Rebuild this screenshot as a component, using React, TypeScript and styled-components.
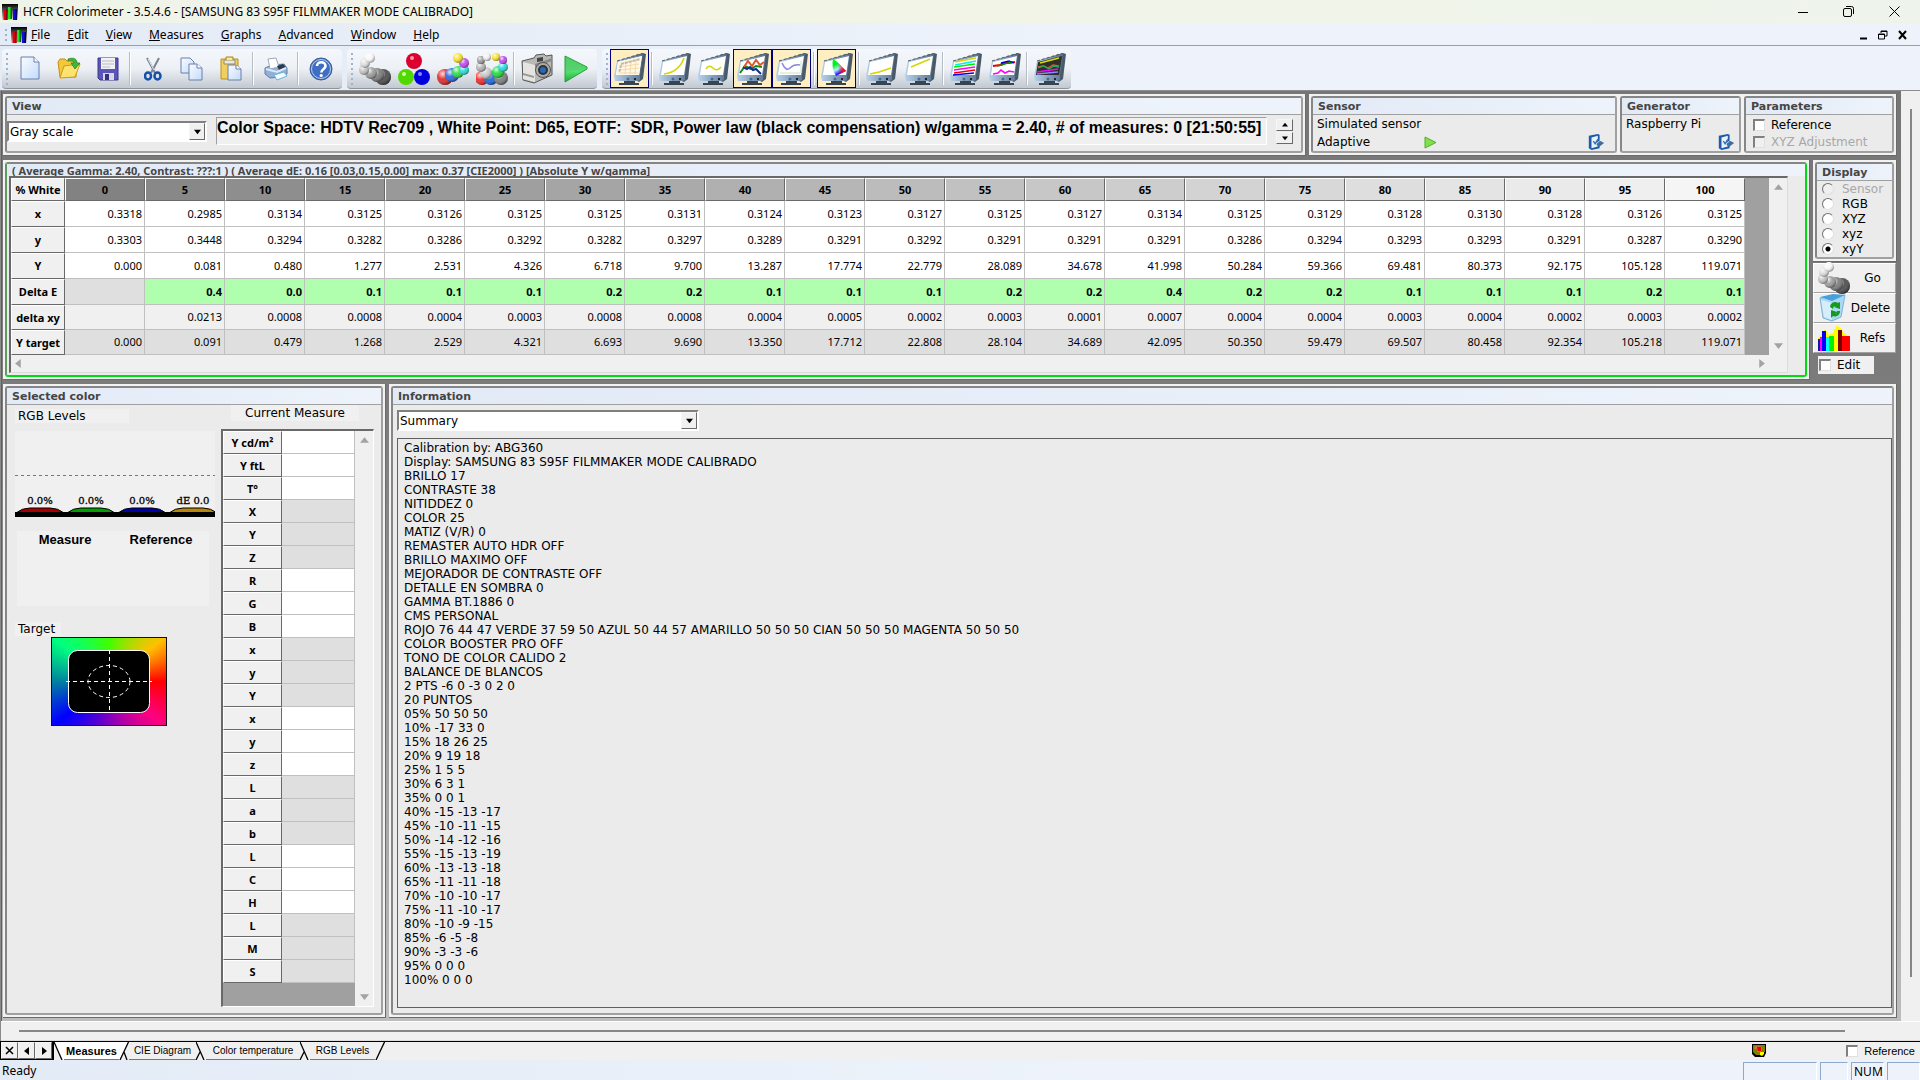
import React from "react";
import styled, { createGlobalStyle, css } from "styled-components";

const UI = `"Noto Sans", "Open Sans", sans-serif`;
const WIDE = `"DejaVu Sans", sans-serif`;
const ARIAL = `"Liberation Sans", Arial, sans-serif`;

const Global = createGlobalStyle`
  * { box-sizing: border-box; }
  body { margin: 0; background: #f0f0f0; font: 12px/14px ${WIDE}; color: #000; }
  button, input, select, textarea { font: inherit; color: inherit; margin: 0; border-radius: 0; }
`;

/* ---------- window frame ---------- */
const Window = styled.div`
  min-height: 100vh;
  display: flex;
  flex-direction: column;
`;
const TitleBar = styled.header`
  display: flex;
  align-items: center;
  gap: 5px;
  height: 23px;
  padding: 0 20px 0 2px;
  background: linear-gradient(90deg, #eff4e9, #f3f4e6 35%, #eef4ec);
  font: 12px/16px ${UI};
`;
const Spacer = styled.span`
  flex: 1;
`;
const Bare = styled.button`
  display: flex;
  align-items: center;
  justify-content: center;
  padding: 0;
  border: 0;
  background: none;
`;
const Caption = styled.div<{ $gap: number }>`
  display: flex;
  align-items: center;
  gap: ${(p) => p.$gap}px;
`;
const MenuBar = styled.nav`
  display: flex;
  align-items: center;
  height: 23px;
  padding: 2px 13px 0 5px;
  gap: 4px;
  background: linear-gradient(90deg, #e3ebf6, #eef3fb 60%);
  border-bottom: 1px solid #a0a0a0;
`;
const MenuList = styled.div`
  display: flex;
  gap: 17px;
`;
const MenuItem = styled(Bare)`
  font: 12px/18px ${UI};
  white-space: pre;
`;
const Grip = styled.span<{ $tall?: boolean }>`
  width: 2px;
  height: ${(p) => (p.$tall ? 32 : 12)}px;
  background: repeating-linear-gradient(#9db4cf 0 2px, transparent 2px 5px);
`;
const ToolStrip = styled.div`
  display: flex;
  gap: 5px;
  height: 45px;
  padding: 3px 3px 1px 2px;
  background: linear-gradient(90deg, #e3ebf6, #eef3fb 60%);
  border-bottom: 1px solid #8d8d8d;
`;
const ToolGroup = styled.div`
  display: flex;
  align-items: center;
  padding: 0 2px 0 4px;
  border-bottom: 1px solid #8d949c;
  border-radius: 4px;
  background: linear-gradient(#f4f7fb, #edf1f6 50%, #c3c9d1);
`;
const Tools = styled.div`
  display: flex;
  align-items: center;
  padding-left: 2px;
`;
const ToolButton = styled(Bare)<{ $on?: boolean }>`
  width: 39px;
  height: 39px;
  ${(p) =>
    p.$on &&
    css`
      border: 1px solid #000080;
      background: #ffeec2;
    `}
`;
const ToolSep = styled.span`
  width: 2px;
  height: 33px;
  margin: 0 2px;
  border-left: 1px solid #b4bcc6;
  border-right: 1px solid #fff;
`;

/* ---------- document area ---------- */
const Client = styled.div`
  flex: 1;
  display: grid;
  grid-template-columns: minmax(0, 1fr) 19px;
  grid-template-rows: 1fr 20px;
  border-left: 1px solid #8a8a8a;
`;
const Dialog = styled.main`
  display: flex;
  flex-direction: column;
  gap: 4px;
  padding: 3px 4px 3px 1px;
  background: linear-gradient(#767676, #7c7c7c 35%, #bdbdbd);
  border-left: 1px solid #5f5f5f;
`;
const Track = styled.div<{ $row?: boolean }>`
  display: flex;
  background: #f0f0f0;
  ${(p) =>
    p.$row
      ? css`
          grid-column: 1 / -1;
          align-items: center;
          padding: 0 75px 1px 18px;
          border-top: 1px solid #fff;
          border-bottom: 1px solid #dcdcdc;
        `
      : css`
          justify-content: center;
          padding: 18px 0 44px;
        `}
`;
const Thumb = styled.span<{ $row?: boolean }>`
  background: #868686;
  ${(p) => (p.$row ? "flex: 1; height: 2px;" : "width: 2px;")}
`;
const Line = styled.div<{ $grow?: boolean }>`
  display: flex;
  gap: 3px;
  ${(p) => p.$grow && "flex: 1;"}
`;
const Group = styled.div<{ $grow?: boolean }>`
  display: flex;
  gap: 3px;
  padding: 2px;
  background: #f2f2f2;
  border-right: 1px solid #6b6b6b;
  border-bottom: 1px solid #6b6b6b;
  ${(p) => p.$grow && "flex: 1; min-width: 0;"}
`;
const Panel = styled.section<{ $w?: number; $green?: boolean }>`
  display: flex;
  flex-direction: column;
  ${(p) => (p.$w ? `width: ${p.$w}px;` : "flex: 1; min-width: 0;")}
  border: 2px solid;
  border-color: #868686 #a0a0a0 #a0a0a0 #868686;
  border-radius: 3px;
  background: #ebebeb;
  ${(p) =>
    p.$green &&
    css`
      border-color: #868686 #00dc14 #00dc14 #5f9a62;
    `}
`;
const PanelTitle = styled.h2<{ $small?: boolean }>`
  margin: 0;
  padding: 0 5px;
  height: ${(p) => (p.$small ? 12 : 17)}px;
  overflow: hidden;
  white-space: nowrap;
  color: #454545;
  background: linear-gradient(90deg, #e2eaf6, #eef3fb);
  font: bold 11px/17px ${WIDE};
  ${(p) => (p.$small ? `font: bold 11px/13px ${UI};` : "border-bottom: 1px solid #a0a0a0;")}
`;
const Body = styled.div<{ $col?: boolean }>`
  flex: 1;
  display: flex;
  min-width: 0;
  ${(p) => p.$col && "flex-direction: column;"}
`;

/* ---------- drop-down ---------- */
const Combo = styled.div<{ $w: number }>`
  display: flex;
  width: ${(p) => p.$w}px;
  height: 21px;
  border: 2px solid;
  border-color: #808080 #fff #fff #808080;
  background: #fff;
`;
const Select = styled.select`
  appearance: none;
  flex: 1;
  min-width: 0;
  padding: 0 1px;
  border: 0;
  background: #fff;
  font: 12px/16px ${WIDE};
`;
const raised = css`
  border: 1px solid;
  border-color: #f6f6f6 #696969 #696969 #f6f6f6;
  background: #f0f0f0;
`;
const ComboArrow = styled.span`
  ${raised}
  width: 16px;
  display: flex;
  align-items: center;
  justify-content: center;
  pointer-events: none;
`;

/* ---------- view / sensor row ---------- */
const ViewBody = styled(Body)`
  align-items: flex-start;
  gap: 9px;
  padding: 2px 8px 6px 0;
`;
const StatusText = styled.output`
  flex: 1;
  min-width: 0;
  height: 28px;
  overflow: hidden;
  white-space: pre;
  border: 1px solid;
  border-color: #a0a0a0 #fff #fff #a0a0a0;
  background: #f0f0f0;
  font: bold 16px/19px ${ARIAL};
`;
const ComboSlot = styled.div`
  padding-top: 4px;
`;
const Spin = styled.div`
  display: flex;
  flex-direction: column;
  gap: 1px;
  padding: 2px 0 0;
`;
const SpinButton = styled(Bare)`
  ${raised}
  width: 17px;
  height: 12px;
`;
const DeviceBody = styled(Body)<{ $end: number }>`
  flex-direction: column;
  padding: 0 ${(p) => p.$end}px 0 3px;
  line-height: 17px;
`;
const DeviceRow = styled.div`
  display: flex;
  align-items: center;
  height: 18px;
`;
const DeviceName = styled.span<{ $w?: number }>`
  padding-left: 1px;
  ${(p) => p.$w && `width: ${p.$w}px;`}
`;
const Checks = styled(Body)`
  flex-direction: column;
  padding: 1px 7px;
`;
const CheckLabel = styled.label<{ $off?: boolean }>`
  display: flex;
  align-items: center;
  gap: 6px;
  height: 17px;
  ${(p) => p.$off && "color: #a8a8a8;"}
`;
const Check = styled.input`
  appearance: none;
  width: 12px;
  height: 12px;
  border: 1px solid;
  border-width: 2px 1px 1px 2px;
  border-color: #808080 #e0e0e0 #e0e0e0 #808080;
  background: #fff;
  &:disabled {
    background: #f0f0f0;
  }
`;

/* ---------- measures table ---------- */
const GridBox = styled.div`
  flex: 1;
  min-width: 0;
  display: grid;
  grid-template-columns: minmax(0, 1fr) 18px;
  grid-template-rows: 177px 17px;
  margin: 0 17px 2px 2px;
  border: 1px solid;
  border-width: 2px 1px 1px 2px;
  border-color: #696969 #dcdcdc #dcdcdc #696969;
  background: #f0f0f0;
`;
const GridView = styled.div`
  overflow: hidden;
  background: #a0a0a0;
`;
const Sheet = styled.table`
  table-layout: fixed;
  width: 1734px;
  border-collapse: separate;
  border-spacing: 0;
  background: #f0f0f0;
  font: 11px/14px ${UI};
  th,
  td {
    padding: 0 2px;
    white-space: nowrap;
    overflow: hidden;
  }
`;
const headEdge = css`
  border: 1px solid;
  border-color: #fff #696969 #696969 #fff;
`;
const ColHead = styled.th<{ $shade: number }>`
  ${headEdge}
  height: 23px;
  background: rgb(${(p) => `${p.$shade}, ${p.$shade}, ${p.$shade}`});
`;
const RowHead = styled.th`
  ${headEdge}
  background: #f0f0f0;
`;
const Cell = styled.td<{ $bg: string; $bold?: boolean }>`
  border-right: 1px solid #c0c0c0;
  border-bottom: 1px solid #c0c0c0;
  text-align: right;
  background: ${(p) => p.$bg};
  font-weight: ${(p) => (p.$bold ? "bold" : "normal")};
`;
const SheetRow = styled.tr<{ $h: number }>`
  height: ${(p) => p.$h}px;
`;
const Bar = styled.div<{ $row?: boolean }>`
  display: flex;
  flex-direction: ${(p) => (p.$row ? "row" : "column")};
  justify-content: space-between;
  align-items: center;
  padding: ${(p) => (p.$row ? "0 3px" : "5px 0")};
  background: #f0f0f0;
`;

/* ---------- right column ---------- */
const Side = styled.div`
  display: flex;
  flex-direction: column;
  width: 84px;
`;
const Radios = styled(Body)`
  flex-direction: column;
  padding: 0 0 1px 5px;
`;
const RadioLabel = styled.label<{ $off?: boolean }>`
  display: flex;
  align-items: center;
  gap: 8px;
  height: 15px;
  ${(p) => p.$off && "color: #a8a8a8;"}
`;
const Radio = styled.input`
  appearance: none;
  width: 12px;
  height: 12px;
  border: 1px solid;
  border-color: #707070 #e0e0e0 #e0e0e0 #707070;
  border-radius: 6px;
  background: #fff;
  &:checked {
    background: radial-gradient(circle, #000 0 2px, #fff 3px);
  }
  &:disabled {
    background: #f0f0f0;
  }
`;
const SideButton = styled.button`
  display: flex;
  align-items: center;
  width: 83px;
  height: 30px;
  padding: 0 0 0 4px;
  border: 1px solid;
  border-color: #fff #a0a0a0 #a0a0a0 #fff;
  background: #f0f0f0;
  font: 12px/16px ${WIDE};
  span {
    flex: 1;
    text-align: center;
  }
`;
const EditLabel = styled.label`
  display: flex;
  align-items: center;
  gap: 6px;
  width: 56px;
  height: 18px;
  margin: 3px 0 0 5px;
  padding-left: 1px;
  background: #f0f0f0;
`;
const SideStack = styled.div`
  padding-top: 1px;
`;

/* ---------- selected color ---------- */
const LeftCol = styled.div`
  width: 214px;
  padding: 4px 0 0 8px;
`;
const RightCol = styled.div`
  flex: 1;
  display: flex;
  flex-direction: column;
  padding: 0 7px 6px 0;
`;
const Tag = styled.div<{ $w: number }>`
  width: ${(p) => p.$w}px;
  padding-left: 3px;
  background: #f0f0f0;
`;
const ChartSlot = styled.div`
  padding: 8px 0 14px;
  svg {
    display: block;
  }
`;
const Swatches = styled.div`
  display: flex;
  width: 192px;
  height: 75px;
  margin: 0 0 16px 2px;
  padding-top: 1px;
  background: #f0f0f0;
  font: bold 13px/16px ${ARIAL};
  span {
    flex: 1;
    text-align: center;
  }
`;
const Wheel = styled.div`
  width: 116px;
  height: 89px;
  margin: 1px 0 0 36px;
  border: 1px solid #111;
  background: conic-gradient(#40ff00, #ffc000 52deg, #ff0000 90deg, #ff0080 128deg, #8000c0 180deg, #0000ff 232deg, #0080a0 270deg, #00ff80 308deg, #40ff00);
  svg {
    display: block;
  }
`;
const MeasureTitle = styled.div`
  width: 128px;
  margin: 0 0 8px 10px;
  line-height: 16px;
  text-align: center;
  background: #f0f0f0;
`;
const MeasureBox = styled.div`
  flex: 1;
  display: grid;
  grid-template-columns: minmax(0, 1fr) 18px;
  border: 1px solid;
  border-width: 2px 1px 1px 2px;
  border-color: #696969 #fff #fff #696969;
  background: #a0a0a0;
`;
const MeasureTable = styled(Sheet)`
  width: 132px;
  height: 552px;
`;

/* ---------- information ---------- */
const InfoBody = styled(Body)`
  flex-direction: column;
  gap: 7px;
  padding: 5px 0 5px 4px;
`;
const InfoText = styled.textarea`
  flex: 1;
  display: block;
  width: 100%;
  padding: 2px 6px;
  border: 1px solid #606060;
  outline: 0;
  resize: none;
  background: #ebebeb;
  font: 12px/14px ${WIDE};
`;

/* ---------- tabs and status ---------- */
const TabBar = styled.nav`
  display: flex;
  align-items: stretch;
  height: 19px;
  border-top: 1px solid #000;
  background: #f0f0f0;
  font: 11px/16px ${ARIAL};
`;
const NavButton = styled(Bare)`
  ${raised}
  width: 17px;
  height: 17px;
`;
const NavSet = styled.div`
  display: flex;
  border: 1px solid #000;
  border-width: 0 2px 1px 1px;
`;
const Tab = styled(Bare)<{ $on?: boolean; $w: number }>`
  width: ${(p) => p.$w}px;
  border-bottom: 1px solid #777;
  background: ${(p) => (p.$on ? "#fff" : "#f0f0f0")};
  font-weight: ${(p) => (p.$on ? "bold" : "normal")};
  font-size: ${(p) => (p.$on ? 11 : 10)}px;
  white-space: nowrap;
`;
const TabCheck = styled.label`
  display: flex;
  align-items: center;
  gap: 6px;
  padding: 0 5px 1px 80px;
`;
const StatusBar = styled.footer`
  display: flex;
  align-items: stretch;
  gap: 3px;
  height: 20px;
  padding-left: 2px;
  background: linear-gradient(90deg, #e3ebf6, #eef3fb 60%);
  font: 12px/22px ${UI};
`;
const Pane = styled.span<{ $w: number }>`
  width: ${(p) => p.$w}px;
  margin-top: 2px;
  padding-left: 2px;
  border: 1px solid;
  border-width: 1px 1px 0 1px;
  border-color: #8fa9cc #fff #fff #8fa9cc;
  line-height: 17px;
`;

/* ---------- drawings ---------- */
const Arrow = ({ dir, color = "#000", size = 6 }: { dir: "up" | "down" | "left" | "right"; color?: string; size?: number }) => {
  const d = { up: "M0 6L4 1L8 6z", down: "M0 2L4 7L8 2z", left: "M6 0L1 4L6 8z", right: "M2 0L7 4L2 8z" }[dir];
  return (
    <svg width={size} height={size} viewBox="0 0 8 8">
      <path d={d} fill={color} />
    </svg>
  );
};

const Logo = ({ s }: { s: number }) => (
  <svg width={s} height={s} viewBox="0 0 16 16">
    <defs>
      <linearGradient id="lg" x1="0" y1="0" x2="0" y2="1">
        <stop offset="0" stopColor="#000" />
        <stop offset="1" stopColor="#ddd" />
      </linearGradient>
    </defs>
    <rect width="16" height="16" fill="url(#lg)" />
    <path d="M1.500 5h4v11h-4z" fill="#e00010" />
    <path d="M4 5h1.500v11H4z" fill="#700" />
    <path d="M6 3h4v12H6z" fill="#20e020" />
    <path d="M8.500 3H10v12H8.500z" fill="#060" />
    <path d="M11 5h4v11h-4z" fill="#1010d0" />
    <path d="M13.500 5H15v11h-1.500z" fill="#006" />
  </svg>
);

const Ball = ({ x, y, r, c }: { x: number; y: number; r: number; c: string }) => (
  <g>
    <circle cx={x} cy={y} r={r} fill={c} />
    <circle cx={x} cy={y} r={r} fill="url(#ballShade)" />
  </g>
);
const flat = (x: number, y: number, c: string) => <circle cx={x} cy={y} r={8} fill={c} />;

const HiddenDefs = styled.svg`
  position: absolute;
`;
const SharedDefs = () => (
  <HiddenDefs width="0" height="0" aria-hidden="true">
    <defs>
      <radialGradient id="ballShade" cx="0.35" cy="0.3" r="0.75">
        <stop offset="0" stopColor="#fff" stopOpacity="0.85" />
        <stop offset="0.45" stopColor="#fff" stopOpacity="0.1" />
        <stop offset="1" stopColor="#000" stopOpacity="0.5" />
      </radialGradient>
      <linearGradient id="page" x1="0" y1="0" x2="1" y2="1">
        <stop offset="0" stopColor="#fafcff" />
        <stop offset="1" stopColor="#c3dbfa" />
      </linearGradient>
      <linearGradient id="bezel" x1="0" y1="0" x2="1" y2="0">
        <stop offset="0" stopColor="#b6d2ec" />
        <stop offset="1" stopColor="#56728f" />
      </linearGradient>
      <linearGradient id="go" x1="0" y1="0" x2="0" y2="1">
        <stop offset="0" stopColor="#3cc454" />
        <stop offset="0.6" stopColor="#52e070" />
        <stop offset="1" stopColor="#1fa83c" />
      </linearGradient>
      <linearGradient id="cieA" x1="0" y1="0" x2="0.4" y2="1">
        <stop offset="0.35" stopColor="#00f020" />
        <stop offset="0.65" stopColor="#b0f0ff" />
        <stop offset="0.9" stopColor="#2020ff" />
      </linearGradient>
      <linearGradient id="cieB" x1="0" y1="0" x2="1" y2="0">
        <stop offset="0.4" stopColor="#ff0000" stopOpacity="0" />
        <stop offset="0.85" stopColor="#ff1020" />
      </linearGradient>
    </defs>
  </HiddenDefs>
);

const GrayBalls = () => (
  <svg width="32" height="32" viewBox="0 0 32 32">
    <Ball x={24} y={24} r={8} c="#444" />
    <Ball x={18} y={22} r={7} c="#777" />
    <Ball x={12} y={20} r={6} c="#999" />
    <Ball x={5} y={17} r={5} c="#c0c0c0" />
    <Ball x={6} y={10} r={5} c="#dcdcdc" />
    <Ball x={11} y={5} r={5} c="#f6f6f6" />
  </svg>
);
const PrimaryBalls = () => (
  <svg width="32" height="32" viewBox="0 0 32 32">
    {flat(16, 8, "#dc0032")}
    {flat(8, 24, "#50d800")}
    {flat(24, 24, "#0000dc")}
    <circle cx="14" cy="5" r="2" fill="#f99" />
    <circle cx="6" cy="21" r="2" fill="#cfa" />
    <circle cx="22" cy="21" r="2" fill="#88f" />
  </svg>
);
const ColorBalls = () => (
  <svg width="32" height="32" viewBox="0 0 32 32">
    <Ball x={8} y={24} r={8} c="#e02020" />
    <Ball x={15} y={22} r={7} c="#2060e0" />
    <Ball x={21} y={19} r={6} c="#20e040" />
    <Ball x={27} y={17} r={5} c="#20d8d8" />
    <Ball x={27} y={10} r={5} c="#c040f0" />
    <Ball x={21} y={5} r={5} c="#f8e020" />
  </svg>
);
const RingBalls = () => (
  <svg width="32" height="32" viewBox="0 0 32 32">
    <Ball x={6} y={25} r={7} c="#f02020" />
    <Ball x={15} y={25} r={7} c="#1060e0" />
    <Ball x={25} y={25} r={7} c="#777" />
    <Ball x={10} y={20} r={6} c="#c8c8c8" />
    <Ball x={22} y={19} r={6} c="#10e030" />
    <Ball x={5} y={14} r={5} c="#b0b0b0" />
    <Ball x={27} y={14} r={5} c="#20d8d8" />
    <Ball x={5} y={7} r={4} c="#999" />
    <Ball x={27} y={7} r={4} c="#c040f0" />
    <Ball x={11} y={4} r={4} c="#eee" />
    <Ball x={20} y={4} r={4} c="#f8e020" />
  </svg>
);
const Camera = () => (
  <svg width="32" height="32" viewBox="0 0 32 32">
    <path d="M1 8l12-3 2-3 8-1 2 2 6-1v20L13 30 2 27z" fill="#b8b8b4" stroke="#555" />
    <path d="M2 9l12 3v17L2 26z" fill="#e4e4e0" />
    <path d="M14 11l17-6v3l-17 6z" fill="#8a8a86" />
    <path d="M2 20l11 3v2L2 22z" fill="#999" />
    <circle cx="22" cy="17" r="7.500" fill="#aaa" stroke="#555" />
    <circle cx="22" cy="17" r="5" fill="#333" />
    <circle cx="22" cy="17" r="3" fill="#1f6bbf" />
    <path d="M16 5l6-1v4l-6 1z" fill="#444" />
  </svg>
);
const Play = () => (
  <svg width="26" height="28" viewBox="0 0 26 28">
    <path d="M2 1L24 12v2L2 27z" fill="url(#go)" stroke="#27a03c" />
    <path d="M3 2L23 12.500 3 17z" fill="#58cf70" opacity=".7" />
  </svg>
);
const NewDoc = () => (
  <svg width="20" height="26" viewBox="0 0 20 26">
    <path d="M1 1h13l5 5v17H1z" fill="url(#page)" stroke="#6b7fae" />
    <path d="M14 1v5h5" fill="#fff" stroke="#6b7fae" />
  </svg>
);
const Open = () => (
  <svg width="24" height="24" viewBox="0 0 24 24">
    <path d="M1 5l2-3h5l2 2h9v16H3z" fill="#f3c63c" stroke="#c18e10" />
    <path d="M3 21L7 9l16-2-5 13z" fill="#ffe36e" stroke="#c99a1a" />
    <path d="M11 2c6-2 9 0 9 4h3l-5 6-4-6h3c0-2-2-3-6-2z" fill="#3db83a" stroke="#1c7f1a" strokeWidth=".7" />
  </svg>
);
const Save = () => (
  <svg width="22" height="24" viewBox="0 0 22 24">
    <path d="M1 1h20v22H3l-2-2z" fill="#5b55b8" stroke="#3c3790" />
    <path d="M4 1h14v11H4z" fill="#f2f2f4" />
    <path d="M5 4h12M5 7h12M5 10h8" stroke="#b8b8c0" />
    <path d="M6 16h11v7H6z" fill="#d8d8e4" />
    <path d="M8 17h4v6H8z" fill="#353080" />
  </svg>
);
const Cut = () => (
  <svg width="18" height="24" viewBox="0 0 18 24">
    <path d="M3 1l8 15M15 1L7 16" stroke="#7a8496" strokeWidth="2" fill="none" />
    <path d="M4 2l6 11" stroke="#dfe4ea" />
    <ellipse cx="4" cy="19" rx="3" ry="3.500" fill="none" stroke="#1451a8" strokeWidth="2.500" />
    <ellipse cx="13.500" cy="19" rx="3" ry="3.500" fill="none" stroke="#1451a8" strokeWidth="2.500" />
  </svg>
);
const Copy = () => (
  <svg width="23" height="24" viewBox="0 0 23 24">
    <path d="M1 1h9l4 4v11H1z" fill="url(#page)" stroke="#6b7fae" />
    <path d="M9 7h8l5 4v12H9z" fill="url(#page)" stroke="#6b7fae" />
    <path d="M17 7v4h5" fill="#fff" stroke="#6b7fae" />
  </svg>
);
const Paste = () => (
  <svg width="22" height="25" viewBox="0 0 22 25">
    <path d="M1 3h17v20H1z" fill="#f0cf5c" stroke="#b98f22" />
    <path d="M4 4h11v4H4z" fill="#e9e9e0" stroke="#9a8c5c" />
    <path d="M6 4V1h7v3" fill="#ffe98a" stroke="#a2821e" />
    <path d="M8 9h8l5 4v11H8z" fill="url(#page)" stroke="#6b7fae" />
    <path d="M16 9v4h5" fill="#fff" stroke="#6b7fae" />
  </svg>
);
const Print = () => (
  <svg width="24" height="24" viewBox="0 0 24 24">
    <path d="M1 11l7-3 12-1 3 4v6l-6 3-11 1-5-4z" fill="#8fb0d8" stroke="#5f7fa8" />
    <path d="M4 2l8-1 3 9-9 2z" fill="#fff" stroke="#9ab" />
    <path d="M13 9l6-2 3 3-7 3z" fill="#2c3a50" />
    <path d="M2 12l11 3 9-4" stroke="#dce9f7" strokeWidth="2" fill="none" />
    <path d="M10 18l10-3 3 4-10 4z" fill="#f4fbff" stroke="#6cb0dc" />
  </svg>
);
const Help = () => (
  <svg width="24" height="24" viewBox="0 0 24 24">
    <circle cx="12" cy="12" r="11" fill="#3f6fc4" stroke="#3c5a94" />
    <circle cx="12" cy="12" r="9.500" fill="none" stroke="#b9cdf0" />
    <path d="M8 9c0-5 8.500-5 8.500 0 0 3.500-4.200 3-4.200 6.500" fill="none" stroke="#fff" strokeWidth="2.600" />
    <circle cx="12.200" cy="18.500" r="1.600" fill="#fff" />
  </svg>
);

const Monitor = ({ dark, children }: { dark?: boolean; children?: React.ReactNode }) => (
  <svg width="32" height="32" viewBox="0 0 32 32">
    <path d="M3 8L29 0l3 1-3 25-4 3-4-2z" fill="#4b5a68" />
    <path d="M3 8L29 1l-3 21v5l-2 1H1l-1-5z" fill="url(#bezel)" />
    <path d="M4 9L28 3l-3 19H2z" fill={dark ? "#2e2e2e" : "#fff"} />
    <path d="M3 8L29 0" stroke="#56616b" strokeDasharray="3 2" />
    <circle cx="14" cy="26" r="1.500" fill="#4a6a8c" />
    <path d="M20 25h2v2h-2z" fill="#223" />
    <path d="M10 28h11v2h4v2H5v-2h5z" fill="#3a444e" />
    {children}
  </svg>
);
const Stroke = ({ d, c, w = 1.3 }: { d: string; c: string; w?: number }) => (
  <path d={d} stroke={c} strokeWidth={w} fill="none" />
);

const Gear = () => (
  <svg width="18" height="18" viewBox="0 0 18 20">
    <path d="M1 3l10-2 2 1v15l-9 2-3-2z" fill="#1d5ba8" />
    <path d="M4 5l7-2v12l-7 2z" fill="#eaf3fb" />
    <path d="M6 9l2 3 3-5" stroke="#2a6ab8" strokeWidth="1.500" fill="none" />
    <path d="M9 9l5 0 4 2-5 4-3-1z" fill="#3c6f9e" />
    <path d="M9 12l4-3" stroke="#cde" />
  </svg>
);
const Bin = () => (
  <svg width="28" height="28" viewBox="0 0 28 28">
    <path d="M2 4L27 1l-4 22-9 4-9-3z" fill="#a9d8f5" stroke="#7fb3d8" />
    <path d="M2 3l12 4L27 1l-12-1z" fill="#4aa0dc" />
    <path d="M3 6l11 3v17l-8-3z" fill="#d6eefb" />
    <path d="M12 13a5 5 0 0 1 8-4l2-1v7l-6-2 2-1a3 3 0 0 0-3 3z" fill="#169a1c" />
    <path d="M22 17a5 5 0 0 1-7 5l-2 2v-8l6 2-2 2a3 3 0 0 0 2-3z" fill="#169a1c" />
  </svg>
);
const Spectrum = () => (
  <svg width="32" height="27" viewBox="0 0 32 27">
    <path d="M0 13l3-2 4-7 4 6 5-3 2-6 4 1 3 5 5 4 2 3v12H0z" fill="#ff0" />
    <path d="M0 14h3v12H0z" fill="#111a99" />
    <path d="M2 12h2v14H2z" fill="#f0f" />
    <path d="M4 6h4v20H4z" fill="#00f" />
    <path d="M8 12h3v14H8z" fill="#0ff" />
    <path d="M11 11h5v15h-5z" fill="#0e0" />
    <path d="M16 4h4v22h-4z" fill="#ff0" />
    <path d="M20 5h4v21h-4z" fill="#700" />
    <path d="M24 11h8v15h-8z" fill="#f00" />
  </svg>
);

const RgbChart = () => {
  const bars = [
    { c: "#a80000", t: "0.0%" },
    { c: "#00a000", t: "0.0%" },
    { c: "#0000a8", t: "0.0%" },
    { c: "#b8860b", t: "dE 0.0" },
  ];
  return (
    <svg width="200" height="86" viewBox="0 0 200 86">
      <rect width="200" height="86" fill="#f0f0f0" />
      <path d="M0 44.500h200" stroke="#777" strokeDasharray="3 3" />
      {bars.map((b, i) => (
        <g key={i}>
          <path d={`M${i * 51 + 1} 82q6-5 14-5h20q8 0 14 5z`} fill={b.c} stroke="#000" />
          <text x={i * 51 + 25} y="73" textAnchor="middle" fontFamily="DejaVu Serif, serif" fontSize="10" stroke="#000" strokeWidth=".3">
            {b.t}
          </text>
        </g>
      ))}
      <rect y="81" width="200" height="5" />
    </svg>
  );
};

/* ---------- data ---------- */
const levels = Array.from({ length: 21 }, (_, i) => i * 5);
const rows = [
  { name: "x", h: 26, bg: "#fff", v: "0.3318 0.2985 0.3134 0.3125 0.3126 0.3125 0.3125 0.3131 0.3124 0.3123 0.3127 0.3125 0.3127 0.3134 0.3125 0.3129 0.3128 0.3130 0.3128 0.3126 0.3125" },
  { name: "y", h: 26, bg: "#fff", v: "0.3303 0.3448 0.3294 0.3282 0.3286 0.3292 0.3282 0.3297 0.3289 0.3291 0.3292 0.3291 0.3291 0.3291 0.3286 0.3294 0.3293 0.3293 0.3291 0.3287 0.3290" },
  { name: "Y", h: 26, bg: "#fff", v: "0.000 0.081 0.480 1.277 2.531 4.326 6.718 9.700 13.287 17.774 22.779 28.089 34.678 41.998 50.284 59.366 69.481 80.373 92.175 105.128 119.071" },
  { name: "Delta E", h: 26, bg: "#afffaf", bold: true, v: "- 0.4 0.0 0.1 0.1 0.1 0.2 0.2 0.1 0.1 0.1 0.2 0.2 0.4 0.2 0.2 0.1 0.1 0.1 0.2 0.1" },
  { name: "delta xy", h: 25, bg: "#f0f0f0", v: "- 0.0213 0.0008 0.0008 0.0004 0.0003 0.0008 0.0008 0.0004 0.0005 0.0002 0.0003 0.0001 0.0007 0.0004 0.0004 0.0003 0.0004 0.0002 0.0003 0.0002" },
  { name: "Y target", h: 25, bg: "#dfdfdf", v: "0.000 0.091 0.479 1.268 2.529 4.321 6.693 9.690 13.350 17.712 22.808 28.104 34.689 42.095 50.350 59.479 69.507 80.458 92.354 105.218 119.071" },
];
const measureNames = ["Y cd/m²", "Y ftL", "T°", "X", "Y", "Z", "R", "G", "B", "x", "y", "Y", "x", "y", "z", "L", "a", "b", "L", "C", "H", "L", "M", "S"];

const infoText = `Calibration by: ABG360
Display: SAMSUNG 83 S95F FILMMAKER MODE CALIBRADO
BRILLO 17
CONTRASTE 38
NITIDDEZ 0
COLOR 25
MATIZ (V/R) 0
REMASTER AUTO HDR OFF
BRILLO MAXIMO OFF
MEJORADOR DE CONTRASTE OFF
DETALLE EN SOMBRA 0
GAMMA BT.1886 0
CMS PERSONAL
ROJO 76 44 47 VERDE 37 59 50 AZUL 50 44 57 AMARILLO 50 50 50 CIAN 50 50 50 MAGENTA 50 50 50
COLOR BOOSTER PRO OFF
TONO DE COLOR CALIDO 2
BALANCE DE BLANCOS
2 PTS -6 0 -3 0 2 0
20 PUNTOS
05% 50 50 50
10% -17 33 0
15% 18 26 25
20% 9 19 18
25% 1 5 5
30% 6 3 1
35% 0 0 1
40% -15 -13 -17
45% -10 -11 -15
50% -14 -12 -16
55% -15 -13 -19
60% -13 -13 -18
65% -11 -11 -18
70% -10 -10 -17
75% -11 -10 -17
80% -10 -9 -15
85% -6 -5 -8
90% -3 -3 -6
95% 0 0 0
100% 0 0 0`;

const menus = ["File", "Edit", "View", "Measures", "Graphs", "Advanced", "Window", "Help"];

type Tool = { label: string; icon: React.ReactNode; on?: boolean } | null;
const fileTools: Tool[] = [
  { label: "New", icon: <NewDoc /> },
  { label: "Open", icon: <Open /> },
  { label: "Save", icon: <Save /> },
  null,
  { label: "Cut", icon: <Cut /> },
  { label: "Copy", icon: <Copy /> },
  { label: "Paste", icon: <Paste /> },
  null,
  { label: "Print", icon: <Print /> },
  null,
  { label: "Help", icon: <Help /> },
];
const measureTools: Tool[] = [
  { label: "Gray scale", icon: <GrayBalls /> },
  { label: "Primaries", icon: <PrimaryBalls /> },
  { label: "Saturations", icon: <ColorBalls /> },
  { label: "Full measure", icon: <RingBalls /> },
  null,
  { label: "Snapshot", icon: <Camera /> },
  { label: "Run", icon: <Play /> },
];
const graphTools: Tool[] = [
  {
    label: "Measures view",
    on: true,
    icon: (
      <Monitor>
        <path d="M4 9L28 3l-3 19H2z" fill="#fff8ea" />
        <path d="M7 11l19-5M6 14l19-3M6 17l19-2M6 20h18M12 10l-1 11M17 8l-1 13M22 7l-1 14" stroke="#f3d9a4" />
        <path d="M7 11l19-5M7 12l-2 8" stroke="#c4b8a4" strokeWidth="2" strokeDasharray="3 1" />
      </Monitor>
    ),
  },
  null,
  { label: "Luminance", icon: <Monitor><Stroke d="M5 21q15-2 20-16" c="#d8d400" w={1.6} /></Monitor> },
  { label: "Gamma", icon: <Monitor><Stroke d="M8 16q3-5 7-1t8-1" c="#d8d400" w={1.6} /></Monitor> },
  {
    label: "RGB levels",
    on: true,
    icon: (
      <Monitor>
        <Stroke d="M3 20l5-7 6 3 5-3 6 1" c="#158a15" w={2} />
        <Stroke d="M6 14l4 2 3-2 3 3 3-1 5 5" c="#103090" w={2} />
        <Stroke d="M7 14l4-6 4 5 4-6 4 5 4-3" c="#e0592c" w={2} />
      </Monitor>
    ),
  },
  { label: "Color temperature", on: true, icon: <Monitor><path d="M4 20h20M25 8v12" stroke="#cfe0cf" /><Stroke d="M6 10q4 9 8 5t10-3" c="#8c88e0" w={1.6} /></Monitor> },
  null,
  {
    label: "CIE diagram",
    on: true,
    icon: (
      <Monitor>
        <path d="M12 6q3 1 13 12l-10 5q-5-8-3-17z" fill="url(#cieA)" />
        <path d="M12 6q3 1 13 12l-10 5q-5-8-3-17z" fill="url(#cieB)" />
      </Monitor>
    ),
  },
  null,
  { label: "Near black", icon: <Monitor><Stroke d="M4 21l9-2 12-4" c="#d8d400" w={1.6} /></Monitor> },
  { label: "Near white", icon: <Monitor><Stroke d="M6 14l19-8" c="#d8d400" w={1.6} /></Monitor> },
  null,
  {
    label: "Saturation luminance",
    icon: (
      <Monitor>
        <Stroke d="M5 9l21-4" c="#d8d400" />
        <Stroke d="M5 12l21-4" c="#0ee" />
        <Stroke d="M4 14l21-3" c="#0e0" />
        <Stroke d="M4 17l21-3" c="#f0f" />
        <Stroke d="M4 20l21-3" c="#e00" />
        <Stroke d="M3 22l21-2" c="#00e" />
      </Monitor>
    ),
  },
  {
    label: "Saturation shift",
    icon: (
      <Monitor>
        <Stroke d="M4 13l7-1 4-2 5 0 6-1" c="#e00" w={2} />
        <Stroke d="M8 13l5-1 6-2 6-1" c="#090" />
        <Stroke d="M12 10l8-2 5 2" c="#00c" />
        <Stroke d="M4 21l5-1 3-3 4 3 4-2 5 1" c="#f0f" w={1.6} />
      </Monitor>
    ),
  },
  null,
  {
    label: "Free measures",
    icon: (
      <Monitor dark>
        <Stroke d="M6 10l19-5" c="#dd0" />
        <Stroke d="M4 14l5-1 5 2 5-3 6 1" c="#e0592c" />
        <Stroke d="M4 15l6-2 5 3 5-3 5 1" c="#2a5" />
        <Stroke d="M3 19l21-3" c="#f0f" w={1.6} />
        <Stroke d="M3 21l21-2" c="#88f" />
      </Monitor>
    ),
  },
];

const ToolSet = ({ items }: { items: Tool[] }) => (
  <ToolGroup role="toolbar">
    <Grip $tall />
    <Tools>
      {items.map((t, i) =>
        t ? (
          <ToolButton key={i} aria-label={t.label} $on={t.on}>
            {t.icon}
          </ToolButton>
        ) : (
          <ToolSep key={i} />
        ),
      )}
    </Tools>
  </ToolGroup>
);

const ScrollBar = ({ row }: { row?: boolean }) => (
  <Bar $row={row}>
    <Bare aria-label={row ? "Scroll left" : "Scroll up"}>
      <Arrow dir={row ? "left" : "up"} color="#a3a3a3" size={9} />
    </Bare>
    <Bare aria-label={row ? "Scroll right" : "Scroll down"}>
      <Arrow dir={row ? "right" : "down"} color="#a3a3a3" size={9} />
    </Bare>
  </Bar>
);

const DropDown = ({ label, value, w }: { label: string; value: string; w: number }) => (
  <Combo $w={w}>
    <Select aria-label={label} defaultValue={value}>
      <option>{value}</option>
    </Select>
    <ComboArrow>
      <Arrow dir="down" size={7} />
    </ComboArrow>
  </Combo>
);

const TabEdge = ({ kind, left, right }: { kind: "first" | "active" | "mid" | "last"; left: string; right: string }) => (
  <svg width="10" height="18" viewBox="0 0 10 18">
    {kind === "first" && <path d="M0 0H10V18H8z" fill={right} />}
    {(kind === "active" || kind === "last") && <path d="M0 0H10L1 18H0z" fill={left} />}
    {kind === "first" && <path d="M0 0L8 18" stroke="#000" strokeWidth="1.300" />}
    {kind === "active" && <path d="M9.500 0L1 18M5 10L8 18" stroke="#000" strokeWidth="1.300" />}
    {kind === "mid" && <path d="M0 0L8 18M4 10L0 18" stroke="#000" strokeWidth="1.300" />}
    {kind === "last" && <path d="M9.500 0L1 18" stroke="#000" strokeWidth="1.300" />}
  </svg>
);

export default function App() {
  return (
    <Window>
      <Global />
      <SharedDefs />
      <TitleBar>
        <Logo s={16} />
        <span>HCFR Colorimeter - 3.5.4.6 - [SAMSUNG 83 S95F FILMMAKER MODE CALIBRADO]</span>
        <Spacer />
        <Caption $gap={35}>
          <Bare aria-label="Minimize">
            <svg width="10" height="10"><path d="M0 5.500h10" stroke="#000" /></svg>
          </Bare>
          <Bare aria-label="Restore">
            <svg width="11" height="11" fill="none" stroke="#000">
              <rect x=".5" y="2.500" width="8" height="8" rx="1.500" />
              <path d="M3 .5h5.500a2 2 0 0 1 2 2V8" />
            </svg>
          </Bare>
          <Bare aria-label="Close">
            <svg width="11" height="11"><path d="M.5.5l10 10M10.500.5l-10 10" stroke="#000" /></svg>
          </Bare>
        </Caption>
      </TitleBar>
      <MenuBar>
        <Grip />
        <Logo s={16} />
        <MenuList>
          {menus.map((m) => (
            <MenuItem key={m}>
              <u>{m[0]}</u>
              {m.slice(1)}
            </MenuItem>
          ))}
        </MenuList>
        <Spacer />
        <Caption $gap={10}>
          <Bare aria-label="Minimize document">
            <svg width="8" height="10"><path d="M0 8.500h7" stroke="#000" strokeWidth="2" /></svg>
          </Bare>
          <Bare aria-label="Restore document">
            <svg width="10" height="10" fill="none" stroke="#000">
              <path d="M3 3V1h6v5H7M3 1.500h6" />
              <path d="M.5 4h6v5h-6zM.5 4.500h6" />
            </svg>
          </Bare>
          <Bare aria-label="Close document">
            <svg width="9" height="10"><path d="M1 1l7 8M8 1L1 9" stroke="#000" strokeWidth="2" /></svg>
          </Bare>
        </Caption>
      </MenuBar>
      <ToolStrip>
        <ToolSet items={fileTools} />
        <ToolSet items={measureTools} />
        <ToolSet items={graphTools} />
      </ToolStrip>

      <Client>
        <Dialog>
          <Line>
            <Group $grow>
              <Panel>
                <PanelTitle>View</PanelTitle>
                <ViewBody>
                  <ComboSlot>
                    <DropDown label="View" value="Gray scale" w={200} />
                  </ComboSlot>
                  <StatusText>
                    {"Color Space: HDTV Rec709 , White Point: D65, EOTF:  SDR, Power law (black compensation) w/gamma = 2.40, # of measures: 0 [21:50:55]"}
                  </StatusText>
                  <Spin>
                    <SpinButton aria-label="Previous"><Arrow dir="up" /></SpinButton>
                    <SpinButton aria-label="Next"><Arrow dir="down" /></SpinButton>
                  </Spin>
                </ViewBody>
              </Panel>
            </Group>
            <Group>
              <Panel $w={306}>
                <PanelTitle>Sensor</PanelTitle>
                <DeviceBody $end={10}>
                  <DeviceRow><DeviceName>Simulated sensor</DeviceName></DeviceRow>
                  <DeviceRow>
                    <DeviceName $w={108}>Adaptive</DeviceName>
                    <svg width="13" height="13"><path d="M1 1L12 6.500 1 12z" fill="#7fe04a" stroke="#4fb030" /></svg>
                    <Spacer />
                    <Bare aria-label="Configure sensor"><Gear /></Bare>
                  </DeviceRow>
                </DeviceBody>
              </Panel>
              <Panel $w={121}>
                <PanelTitle>Generator</PanelTitle>
                <DeviceBody $end={4}>
                  <DeviceRow><DeviceName>Raspberry Pi</DeviceName></DeviceRow>
                  <DeviceRow>
                    <Spacer />
                    <Bare aria-label="Configure generator"><Gear /></Bare>
                  </DeviceRow>
                </DeviceBody>
              </Panel>
              <Panel $w={150}>
                <PanelTitle>Parameters</PanelTitle>
                <Checks>
                  <CheckLabel><Check type="checkbox" />Reference</CheckLabel>
                  <CheckLabel $off><Check type="checkbox" disabled />XYZ Adjustment</CheckLabel>
                </Checks>
              </Panel>
            </Group>
          </Line>

          <Line>
            <Group $grow>
              <Panel $green>
                <PanelTitle $small>
                  ( Average Gamma: 2.40, Contrast: ???:1 ) ( Average dE: 0.16 [0.03,0.15,0.00] max: 0.37 [CIE2000] ) [Absolute Y w/gamma]
                </PanelTitle>
                <GridBox>
                  <GridView>
                    <Sheet>
                      <colgroup>
                        <col width={54} />
                        {levels.map((l) => <col key={l} width={80} />)}
                      </colgroup>
                      <thead>
                        <tr>
                          <ColHead $shade={240}>% White</ColHead>
                          {levels.map((l) => (
                            <ColHead key={l} $shade={Math.round(130 + l * 1.15)}>{l}</ColHead>
                          ))}
                        </tr>
                      </thead>
                      <tbody>
                        {rows.map((r) => (
                          <SheetRow key={r.name} $h={r.h}>
                            <RowHead>{r.name}</RowHead>
                            {r.v.split(" ").map((v, i) => (
                              <Cell key={i} $bold={r.bold} $bg={r.bold && i === 0 ? "#dfdfdf" : r.bg}>
                                {v === "-" ? "" : v}
                              </Cell>
                            ))}
                          </SheetRow>
                        ))}
                      </tbody>
                    </Sheet>
                  </GridView>
                  <ScrollBar />
                  <ScrollBar row />
                </GridBox>
              </Panel>
            </Group>
            <Side>
              <Group>
                <Panel>
                  <PanelTitle>Display</PanelTitle>
                  <Radios>
                    <RadioLabel $off><Radio type="radio" name="display" disabled />Sensor</RadioLabel>
                    <RadioLabel><Radio type="radio" name="display" />RGB</RadioLabel>
                    <RadioLabel><Radio type="radio" name="display" />XYZ</RadioLabel>
                    <RadioLabel><Radio type="radio" name="display" />xyz</RadioLabel>
                    <RadioLabel><Radio type="radio" name="display" defaultChecked />xyY</RadioLabel>
                  </Radios>
                </Panel>
              </Group>
              <SideStack>
                <SideButton><GrayBalls /><span>Go</span></SideButton>
                <SideButton><Bin /><span>Delete</span></SideButton>
                <SideButton><Spectrum /><span>Refs</span></SideButton>
              </SideStack>
              <EditLabel><Check type="checkbox" />Edit</EditLabel>
            </Side>
          </Line>

          <Line $grow>
            <Group>
              <Panel $w={378}>
                <PanelTitle>Selected color</PanelTitle>
                <Body>
                  <LeftCol>
                    <Tag $w={114}>RGB Levels</Tag>
                    <ChartSlot><RgbChart /></ChartSlot>
                    <Swatches><span>Measure</span><span>Reference</span></Swatches>
                    <Tag $w={46}>Target</Tag>
                    <Wheel>
                      <svg width="114" height="87" viewBox="0 0 114 87">
                        <rect x="16.500" y="12.500" width="81" height="62" rx="9" fill="#000" stroke="#fff" />
                        <path d="M14 43.500h86M57.500 12v63" stroke="#fff" strokeDasharray="4 3" />
                        <ellipse cx="57" cy="43.500" rx="21" ry="16" fill="none" stroke="#fff" strokeDasharray="4 3" />
                      </svg>
                    </Wheel>
                  </LeftCol>
                  <RightCol>
                    <MeasureTitle>Current Measure</MeasureTitle>
                    <MeasureBox>
                      <GridView>
                        <MeasureTable>
                          <colgroup>
                            <col width={59} />
                            <col width={73} />
                          </colgroup>
                          <tbody>
                            {measureNames.map((n, i) => (
                              <SheetRow key={i} $h={23}>
                                <RowHead>{n}</RowHead>
                                <Cell $bg={Math.floor(i / 3) % 2 ? "#dfdfdf" : "#fff"} />
                              </SheetRow>
                            ))}
                          </tbody>
                        </MeasureTable>
                      </GridView>
                      <ScrollBar />
                    </MeasureBox>
                  </RightCol>
                </Body>
              </Panel>
            </Group>
            <Group $grow>
              <Panel>
                <PanelTitle>Information</PanelTitle>
                <InfoBody>
                  <DropDown label="Information" value="Summary" w={302} />
                  <InfoText readOnly aria-label="Summary text" value={infoText} />
                </InfoBody>
              </Panel>
            </Group>
          </Line>
        </Dialog>
        <Track><Thumb /></Track>
        <Track $row><Thumb $row /></Track>
      </Client>

      <TabBar>
        <NavSet>
          <NavButton aria-label="Close view">
            <svg width="9" height="9"><path d="M1 1l7 7M8 1L1 8" stroke="#000" strokeWidth="1.500" /></svg>
          </NavButton>
          <NavButton aria-label="Previous tab"><Arrow dir="left" size={8} /></NavButton>
          <NavButton aria-label="Next tab"><Arrow dir="right" size={8} /></NavButton>
        </NavSet>
        <TabEdge kind="first" left="#f0f0f0" right="#fff" />
        <Tab $on $w={55}>Measures</Tab>
        <TabEdge kind="active" left="#fff" right="#f0f0f0" />
        <Tab $w={67}>CIE Diagram</Tab>
        <TabEdge kind="mid" left="#f0f0f0" right="#f0f0f0" />
        <Tab $w={94}>Color temperature</Tab>
        <TabEdge kind="mid" left="#f0f0f0" right="#f0f0f0" />
        <Tab $w={65}>RGB Levels</Tab>
        <TabEdge kind="last" left="#f0f0f0" right="#f0f0f0" />
        <Spacer />
        <svg width="14" height="16" viewBox="0 -1 14 16">
          <path d="M0 1h14v9l-2 4H3L0 11z" fill="#000" />
          <path d="M1 2h12v7H9v3H4L1 9z" fill="#808000" />
          <path d="M3 4h6v4H5M2 5h3" fill="none" stroke="#f66" />
          <path d="M5 4h4v4H6z" fill="#e00" />
          <path d="M8 9h4v2l-2 2-2-1z" fill="#ff0" />
        </svg>
        <TabCheck><Check type="checkbox" />Reference</TabCheck>
      </TabBar>
      <StatusBar>
        <span>Ready</span>
        <Spacer />
        <Pane $w={74} />
        <Pane $w={28} />
        <Pane $w={33}>NUM</Pane>
        <Pane $w={33} />
      </StatusBar>
    </Window>
  );
}
